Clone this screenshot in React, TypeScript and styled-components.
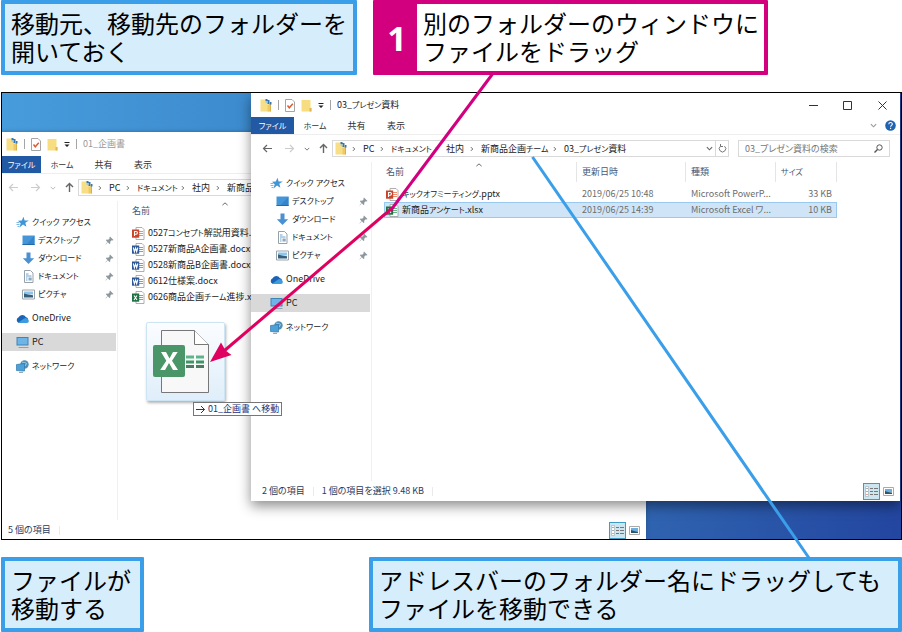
import React from "react";
import styled, { createGlobalStyle } from "styled-components";

const Global = createGlobalStyle`
  * { box-sizing: border-box; }
  body { margin: 0; background: #fff; }
  button, input { font: inherit; color: inherit; border: 0; background: none; padding: 0; margin: 0; }
  svg { display: block; flex: none; }
`;

const BLUE = "#3a9ee8";
const PINK = "#d2007f";

const Page = styled.main`
  position: relative;
  display: flex;
  flex-direction: column;
  gap: 17px;
  padding-left: 1px;
  font-family: "Noto Sans CJK JP", sans-serif;
`;
const CalloutRow = styled.div<{ $spread?: boolean }>`
  display: flex;
  gap: 16px;
  justify-content: ${(p) => (p.$spread ? "space-between" : "flex-start")};
`;
const Callout = styled.section<{ $tone: string; $fill: string }>`
  display: flex;
  border: 4px solid ${(p) => p.$tone};
  border-radius: 1px;
  background: ${(p) => p.$fill};
`;
const CalloutText = styled.p<{ $end?: number }>`
  margin: 0;
  padding: 5px ${(p) => p.$end ?? 6}px 6px 6px;
  font-size: 24px;
  line-height: 28px;
  color: #000;
  white-space: nowrap;
`;
const Step = styled.strong`
  display: flex;
  align-items: center;
  justify-content: center;
  width: 40px;
  background: ${PINK};
  color: #fff;
  font: 700 34px/1 "Open Sans", sans-serif;
`;
const Desktop = styled.div`
  position: relative;
  height: 448px;
  overflow: hidden;
  border: 1px solid #000;
  background:
    linear-gradient(90deg, transparent 70%, #2f63b0 72%, #2346a0 100%),
    linear-gradient(90deg, #479cdb, #3a86cb 35%, #3a86cb);
`;
const Win = styled.section<{ $front?: boolean }>`
  position: absolute;
  top: ${(p) => (p.$front ? 0 : 39)}px;
  left: ${(p) => (p.$front ? 249 : 0)}px;
  right: ${(p) => (p.$front ? 1 : 255)}px;
  height: 408px;
  display: flex;
  flex-direction: column;
  background: #fff;
  color: #222;
  font: 9px/16px "Noto Sans CJK JP", sans-serif;
  font-feature-settings: "palt";
  white-space: nowrap;
  box-shadow: ${(p) => (p.$front ? "0 5px 12px rgba(0,0,0,.45)" : "0 0 4px rgba(0,0,0,.3)")};
`;
const Kana = styled.span`
  font-size: 8px;
`;
const TitleBar = styled.header<{ $inset: number; $dim: boolean }>`
  display: flex;
  align-items: center;
  height: 24px;
  padding-left: ${(p) => p.$inset + 4}px;
  gap: 6px;
  color: ${(p) => (p.$dim ? "#999" : "#222")};
`;
const Rule = styled.i`
  width: 1px;
  height: 10px;
  background: #a5a5a5;
`;
const Title = styled.h2`
  margin: 0;
  font-size: 9px;
  font-weight: 400;
`;
const Push = styled.div`
  display: flex;
  align-items: center;
  margin-left: auto;
`;
const IconButton = styled.button<{ $w: number }>`
  display: flex;
  align-items: center;
  justify-content: center;
  width: ${(p) => p.$w}px;
  height: 16px;
`;
const Tabs = styled.nav`
  display: flex;
  height: 18px;
  border-bottom: 1px solid #eee;
`;
const Tab = styled.button<{ $w: number; $on?: boolean }>`
  width: ${(p) => p.$w}px;
  height: 17px;
  color: ${(p) => (p.$on ? "#fff" : "#333")};
  background: ${(p) => (p.$on ? "#2259a5" : "none")};
`;
const AddressRow = styled.div<{ $inset: number }>`
  display: flex;
  align-items: center;
  height: 27px;
  padding: 0 10px 0 ${(p) => p.$inset}px;
`;
const Address = styled.div`
  flex: 1;
  min-width: 0;
  height: 17px;
  display: flex;
  align-items: center;
  border: 1px solid #d9d9d9;
  padding-left: 2px;
`;
const Crumbs = styled.ol`
  display: flex;
  align-items: center;
  flex: 1;
  min-width: 0;
  overflow: hidden;
  margin: 0;
  padding: 0 0 0 4px;
  list-style: none;
`;
const Crumb = styled.li<{ $w: number }>`
  display: flex;
  align-items: center;
  gap: 6px;
  flex: none;
  width: ${(p) => p.$w}px;
`;
const Refresh = styled(IconButton)`
  border-left: 1px solid #d9d9d9;
`;
const Search = styled.label`
  display: flex;
  align-items: center;
  width: 152px;
  height: 17px;
  margin-left: 9px;
  padding: 0 6px;
  border: 1px solid #d9d9d9;
`;
const SearchInput = styled.input`
  flex: 1;
  min-width: 0;
  height: 15px;
  font-feature-settings: "palt";
  &::placeholder { color: #777; opacity: 1; }
`;
const Body = styled.div`
  display: flex;
  flex: 1;
  min-height: 0;
`;
const Side = styled.nav<{ $inset: number }>`
  width: ${(p) => 116 + p.$inset}px;
  padding-top: 12px;
  border-right: 1px solid #f0f0f0;
`;
const Place = styled.a<{ $inset: number; $sub?: boolean; $gap?: boolean; $on?: boolean }>`
  display: flex;
  align-items: center;
  gap: 3px;
  height: 18px;
  margin: ${(p) => (p.$gap ? 6 : 0)}px 1px 0 0;
  padding: 0 2px 0 ${(p) => p.$inset + (p.$sub ? 20 : 14)}px;
  background: ${(p) => (p.$on ? "#d9d9d9" : "none")};
  color: #222;
  text-decoration: none;
`;
const PinSlot = styled.span`
  margin-left: auto;
`;
const Files = styled.table`
  width: 453px;
  height: max-content;
  margin-left: 12px;
  table-layout: fixed;
  border-spacing: 0;
`;
const Head = styled.th<{ $w: number }>`
  position: relative;
  width: ${(p) => p.$w}px;
  height: 20px;
  padding: 0 0 0 ${(p) => (p.$w > 150 ? 2 : 5)}px;
  border-right: 1px solid #e5e5e5;
  color: #44587c;
  font-weight: 400;
  text-align: left;
`;
const SortMark = styled.span`
  position: absolute;
  top: 0;
  left: 48%;
`;
const Gap = styled.tr`
  height: 4px;
`;
const FileRow = styled.tr<{ $on?: boolean }>`
  height: 16px;
  background: ${(p) => (p.$on ? "#cfe5f7" : "none")};
  outline: ${(p) => (p.$on ? "1px solid #99c9ee" : "none")};
  outline-offset: -1px;
`;
const Cell = styled.td<{ $end?: boolean }>`
  padding: 0 5px;
  line-height: 16px;
  color: #6d6d6d;
  text-align: ${(p) => (p.$end ? "right" : "left")};
`;
const NameCell = styled.td`
  padding: 0 0 0 2px;
`;
const FileName = styled.div`
  display: flex;
  align-items: center;
  gap: 3px;
  line-height: 16px;
`;
const Status = styled.footer<{ $inset: number }>`
  display: flex;
  align-items: center;
  height: 20px;
  gap: 8px;
  padding: 0 3px 0 ${(p) => p.$inset + 6}px;
  color: #2a3b5c;
`;
const Sep = styled.i`
  width: 1px;
  height: 9px;
  background: #eaeaea;
`;
const ViewButton = styled.button<{ $on?: boolean }>`
  display: flex;
  align-items: center;
  justify-content: center;
  width: 17px;
  height: 17px;
  border: ${(p) => (p.$on ? "1px solid #3f9bc4" : "0")};
  background: ${(p) => (p.$on ? "#cce6f1" : "none")};
`;
const Ghost = styled.div`
  position: absolute;
  left: 144px;
  top: 229px;
  width: 79px;
  height: 79px;
  border-radius: 2px;
  border: 1px solid #cde4f3;
  background: linear-gradient(#fbfdff, #dfeefa);
  box-shadow: 1px 2px 3px rgba(0, 0, 0, 0.3);
`;
const DragTip = styled.div`
  position: absolute;
  left: 191px;
  top: 309px;
  display: flex;
  align-items: center;
  gap: 2px;
  height: 14px;
  padding: 0 2px 0 1px;
  border: 1px solid #767676;
  background: #fff;
  color: #23307c;
  font: 9px/12px "Noto Sans CJK JP", sans-serif;
  font-feature-settings: "palt";
  white-space: nowrap;
`;
const Leaders = styled.svg`
  position: absolute;
  top: 0;
  left: 0;
  pointer-events: none;
`;

/* Katakana runs are set one size down so they read as a narrow UI face. */
const UiText = ({ children }: { children: string }) => (
  <span>
    {children.split(/([ァ-ヶー]+)/).map((part, i) => (i % 2 ? <Kana key={i}>{part}</Kana> : part))}
  </span>
);

const FolderDoc = () => (
  <svg width="12" height="13" viewBox="0 0 12 13">
    <path d="M.5.500h6.500l3.500 3.500v8.500H.5z" fill="#f8df86" />
    <path d="M7.500 6h3v6.500h-3z" fill="#efc966" />
    <path d="M10.500 4v8.500" stroke="#d9b04c" />
    <path d="M5.500 0h2v2h-2zM7.500 1h2v2h-2zM7.500 3h1.500v2H7.500zM9.500 3h2v2.500h-2z" fill="#3576b5" />
    <path d="M5.500 2h2v2h-2z" fill="#a8c8d8" />
  </svg>
);
const Folder = () => (
  <svg width="11" height="13" viewBox="0 0 11 13">
    <path d="M.5 1h9v8h1v3.500H.5z" fill="#f7dd80" />
    <path d="M8.500 9h2v3.500h-2z" fill="#dfb650" />
  </svg>
);
const CheckDoc = () => (
  <svg width="10" height="13" viewBox="0 0 10 13" fill="none">
    <path d="M.5.500h6.500l2.500 2.500v9.500h-9z" fill="#fff" stroke="#a5a5a5" />
    <path d="M2.500 6.500 4.300 8.800 7.800 4.800" stroke="#e0582f" strokeWidth="1.400" />
  </svg>
);
const Chevron = ({ dir = "down", c = "#666", s = 7 }: { dir?: "down" | "right" | "up"; c?: string; s?: number }) => {
  const d = { down: "M1 2.500 4 5.500 7 2.500", right: "M2.500 1.500 5 4 2.500 6.500", up: "M.5 5.500 4 2.500 7.500 5.500" }[dir];
  return (
    <svg width={s} height={s} viewBox="0 0 8 8" fill="none" stroke={c} strokeWidth="1.300"><path d={d} /></svg>
  );
};
const Arrow = ({ turn, c, thick = 1.2 }: { turn: number; c: string; thick?: number }) => (
  <svg width="11" height="11" viewBox="0 0 11 11" fill="none" stroke={c} strokeWidth={thick}>
    <path d="M10 5.500H1.500M5 2 1.500 5.500 5 9" transform={`rotate(${turn} 5.500 5.500)`} />
  </svg>
);
const Drop = () => (
  <svg width="6" height="7" viewBox="0 0 6 7" fill="#222"><path d="M.5 1h5v1h-5zM.5 3.500h5L3 6z" /></svg>
);
const PlaceIcon = ({ kind }: { kind: string }) => (
  <svg width="13" height="13" viewBox="0 0 13 13">
    {kind === "star" && (
      <>
        <path d="M7.500.8 8.600 4.500l4.200-.1-3.500 2.400 1.100 4L7 8.600 3.500 11.500l1.200-4.300L2 4.800l3.800-.3z" fill="#3f95d6" />
        <path d="M.5 8.500h3M1.500 10.500h2M.5 6.500h3" stroke="#7bb8e4" />
      </>
    )}
    {kind === "desk" && (
      <>
        <path d="M.5 1.500h12v9.500h-12z" fill="#4496d8" />
        <path d="M12.500 1.500V11H4z" fill="#3485cc" />
        <path d="M.5 10h12v1h-12z" fill="#2468a8" />
      </>
    )}
    {kind === "down" && <path d="M4.500.5h4v5.700h3.700L6.500 12 .8 6.200h3.700z" fill="#4a90d2" />}
    {kind === "doc" && (
      <>
        <path d="M2.500.5h6l2.500 2.500v9.500h-8.500z" fill="#fff" stroke="#97a1aa" />
        <path d="M4 4h2.500M4 6h5.500M4 8h1.500M4 10h1.500" stroke="#6aa2cf" />
        <path d="M6.500 7.500h3.200v3H6.500z" fill="#8aa9c2" />
      </>
    )}
    {kind === "pic" && (
      <>
        <path d="M.5 2h12v9H.5z" fill="#fff" stroke="#9ca3a8" />
        <path d="M2 3.500h9v3H2z" fill="#8ec5ea" />
        <path d="M2 5.500l4 1 5 .8v2.200H2z" fill="#355f7c" />
      </>
    )}
    {kind === "cloud" && (
      <>
        <path d="M3 11a3 3 0 0 1-.4-5.700A4 4 0 0 1 9.800 5 3.100 3.100 0 0 1 10 11z" fill="#1b64b5" />
        <path d="M2.300 10.700 8 6.500a3.300 3.300 0 0 1 4.800 2.300C12.900 10.200 12 11 10.800 11H3z" fill="#3d9be0" />
      </>
    )}
    {kind === "pc" && (
      <>
        <path d="M.5 1h12v8.500H.5z" fill="#3f83b7" />
        <path d="M1.500 2h10v6.500h-10z" fill="#6db5e6" />
        <path d="M2.500 11.500h10" stroke="#8fa0ae" />
      </>
    )}
    {kind === "net" && (
      <>
        <circle cx="8.500" cy="4.500" r="4.200" fill="#4f8fb8" />
        <path d="M6 2c2 1 3 0 4.500 1.500L9 6" stroke="#a9d3e2" fill="none" />
        <path d="M.5 4.500 8.500 3.500v7.500L.5 10.500z" fill="#4ea0d9" stroke="#2f78ad" strokeWidth=".7" />
        <path d="M3 12.300h4" stroke="#7895a8" />
      </>
    )}
  </svg>
);
const Pin = () => (
  <svg width="9" height="9" viewBox="0 0 9 9">
    <path d="M5 .5 8.500 4l-1 .5-.8-.2-1.500 1.500.1 1.700-.8.500-1.700-1.700L.8 8.500.500 8.200l2-2.200L1 4.400l.5-.8 1.700.1L4.700 2.300 4.500 1.300z" fill="#8d979e" />
  </svg>
);
const APP: Record<string, [string, string]> = { P: ["#c8442a", "#e98f74"], W: ["#2b579a", "#7d9ccb"], X: ["#1f7145", "#6bb389"] };
const MARK: Record<string, string> = {
  P: "M2.500 9V4.500h1.600a1.300 1.300 0 0 1 0 2.700H2.500",
  W: "M1.300 4.500 2.400 8.700 3.600 5 4.700 8.700 5.800 4.500",
  X: "M2 4.500 5 9M5 4.500 2 9",
};
const FileIcon = ({ app }: { app: string }) => (
  <svg width="13" height="13" viewBox="0 0 13 13" fill="none">
    <path d="M4 .5h6L12 2.500v10H4z" fill="#fff" stroke="#9a9a9a" strokeWidth=".8" />
    <path d="M7 4.500h4M7 6.500h4M7 8.500h4" stroke={APP[app][1]} strokeWidth="1.200" />
    <path d="M0 2.500h7.200v8.200H0z" fill={APP[app][0]} />
    <path d={MARK[app]} stroke="#fff" strokeWidth="1.100" />
  </svg>
);
const ListView = () => (
  <svg width="13" height="11" viewBox="0 0 13 11" fill="none">
    <path d="M.5.500h3v10h-3z" fill="#fff" stroke="#aab4b8" strokeWidth=".7" />
    <path d="M1.500 2.500h1M1.500 5.500h1" stroke="#557" />
    <path d="M1.500 8.500h1" stroke="#d33" />
    <path d="M5 2.500h3M9 2.500h4M5 5.500h3M9 5.500h4M5 8.500h3M9 8.500h4" stroke="#777" />
  </svg>
);
const PicView = () => (
  <svg width="11" height="9" viewBox="0 0 11 9">
    <path d="M.5.500h10v8h-10z" fill="#fff" stroke="#aaa" />
    <path d="M2 2h7v3H2z" fill="#6bb0e0" />
    <path d="M2 4l3 1 4 .5V7H2z" fill="#2d566b" />
  </svg>
);
const ExcelLarge = () => (
  <svg width="77" height="77" viewBox="0 0 77 77">
    <path d="M14.500 7.500h33l14 14v48h-47z" fill="#f8f8f8" stroke="#777" />
    <path d="M47.500 7.500v14h14" fill="#fff" stroke="#777" />
    <path d="M39 32.500h8v3h-8zM49 32.500h8v3h-8z" fill="#5fb38a" />
    <path d="M39 37.500h8v3h-8zM49 37.500h8v3h-8z" fill="#41946a" />
    <path d="M39 42h8v3h-8zM49 42h8v3h-8z" fill="#4c7a62" />
    <rect x="6" y="22" width="32" height="32" rx="2" fill="#4b9668" />
    <path d="M14 29h5l3.500 6.500L26 29h4.700l-5.700 8.800 6 9.200h-5L22 40l-4 7h-4.800l6.100-9.200z" fill="#fff" />
  </svg>
);

const places = [
  { icon: "star", text: "クイック アクセス" },
  { icon: "desk", text: "デスクトップ", sub: true },
  { icon: "down", text: "ダウンロード", sub: true },
  { icon: "doc", text: "ドキュメント", sub: true },
  { icon: "pic", text: "ピクチャ", sub: true },
  { icon: "cloud", text: "OneDrive", gap: true },
  { icon: "pc", text: "PC", gap: true, on: true },
  { icon: "net", text: "ネットワーク", gap: true },
];
const crumbs: [string, number][] = [["PC", 28], ["ドキュメント", 55], ["社内", 35], ["新商品企画チーム", 83], ["03_プレゼン資料", 90]];

type FileItem = { app: string; name: string; date?: string; type?: string; size?: string; on?: boolean };
type ExplorerProps = { title: string; front?: boolean; files: FileItem[]; status: string[] };

const Explorer = ({ title, front = false, files, status }: ExplorerProps) => {
  const inset = front ? 5 : 0;
  return (
    <Win $front={front} aria-label={title}>
      <TitleBar $inset={inset} $dim={!front}>
        <FolderDoc /><Rule /><CheckDoc /><Folder /><Drop /><Rule />
        <Title><UiText>{title}</UiText></Title>
        {front && (
          <Push>
            <IconButton $w={34} aria-label="最小化"><svg width="9" height="9"><path d="M0 4.500h9" stroke="#333" /></svg></IconButton>
            <IconButton $w={34} aria-label="最大化"><svg width="9" height="9"><path d="M.5.500h8v8h-8z" fill="none" stroke="#333" /></svg></IconButton>
            <IconButton $w={36} aria-label="閉じる"><svg width="9" height="9"><path d="M.5.500l8 8M8.500.500l-8 8" stroke="#333" /></svg></IconButton>
          </Push>
        )}
      </TitleBar>
      <Tabs>
        <Tab $on $w={front ? 43 : 39}><UiText>ファイル</UiText></Tab>
        <Tab $w={42}><UiText>ホーム</UiText></Tab>
        <Tab $w={41}>共有</Tab>
        <Tab $w={38}>表示</Tab>
        {front && (
          <Push>
            <IconButton $w={16} aria-label="リボンの展開"><Chevron c="#999" /></IconButton>
            <IconButton $w={19} aria-label="ヘルプ">
              <svg width="11" height="11" viewBox="0 0 11 11" fill="none">
                <circle cx="5.500" cy="5.500" r="5.300" fill="#1f63b4" />
                <path d="M3.800 4.200c0-2.300 3.500-2.200 3.500-.2 0 1.300-1.700 1.400-1.700 2.800M5.600 7.800v1.200" stroke="#fff" strokeWidth="1.100" />
              </svg>
            </IconButton>
          </Push>
        )}
      </Tabs>
      <AddressRow $inset={inset}>
        <IconButton $w={22} aria-label="戻る"><Arrow turn={0} c={front ? "#666" : "#ccc"} /></IconButton>
        <IconButton $w={22} aria-label="進む"><Arrow turn={180} c="#ccc" /></IconButton>
        <IconButton $w={14} aria-label="履歴"><Chevron s={6} c={front ? "#777" : "#bbb"} /></IconButton>
        <IconButton $w={18} aria-label="上へ"><Arrow turn={90} c="#666" thick={1.4} /></IconButton>
        <Address>
          <FolderDoc />
          <Crumbs>
            {crumbs.map(([text, w]) => (
              <Crumb key={text} $w={w}>
                <Chevron dir="right" s={6} />
                <button><UiText>{text}</UiText></button>
              </Crumb>
            ))}
          </Crumbs>
          <IconButton $w={12} aria-label="履歴を表示"><Chevron /></IconButton>
          <Refresh $w={13} aria-label="更新">
            <svg width="9" height="9" viewBox="0 0 9 9" fill="none" stroke="#777"><path d="M6.500 2.200A3.200 3.200 0 1 1 2.500 2.200M2.500 0v2.500H5" /></svg>
          </Refresh>
        </Address>
        <Search>
          <SearchInput aria-label="検索" placeholder={title + "の検索"} />
          <svg width="9" height="9" viewBox="0 0 9 9" fill="none" stroke="#555"><circle cx="5.500" cy="3.500" r="2.700" /><path d="M3.500 5.500.5 8.500" strokeWidth="1.400" /></svg>
        </Search>
      </AddressRow>
      <Body>
        <Side $inset={inset}>
          {places.map((p) => (
            <Place key={p.text} href="#" $inset={inset} $sub={p.sub} $gap={p.gap} $on={p.on}>
              <PlaceIcon kind={p.icon} />
              <UiText>{p.text}</UiText>
              {p.sub && <PinSlot><Pin /></PinSlot>}
            </Place>
          ))}
        </Side>
        <Files>
          <thead>
            <tr>
              <Head $w={193}>名前<SortMark><Chevron dir="up" s={6} /></SortMark></Head>
              <Head $w={109}>更新日時</Head>
              <Head $w={90}>種類</Head>
              <Head $w={61}><UiText>サイズ</UiText></Head>
            </tr>
            <Gap />
          </thead>
          <tbody>
            {files.map((f) => (
              <FileRow key={f.name} $on={f.on}>
                <NameCell><FileName><FileIcon app={f.app} /><UiText>{f.name}</UiText></FileName></NameCell>
                <Cell>{f.date}</Cell>
                <Cell>{f.type}</Cell>
                <Cell $end>{f.size}</Cell>
              </FileRow>
            ))}
          </tbody>
        </Files>
      </Body>
      <Status $inset={inset}>
        {status.map((s) => (
          <React.Fragment key={s}><span>{s}</span><Sep /></React.Fragment>
        ))}
        <Push>
          <ViewButton $on aria-label="詳細"><ListView /></ViewButton>
          <ViewButton aria-label="大アイコン"><PicView /></ViewButton>
        </Push>
      </Status>
    </Win>
  );
};

export default function App() {
  return (
    <>
      <Global />
      <Page>
        <CalloutRow>
          <Callout $tone={BLUE} $fill="#d6edfb">
            <CalloutText>移動元、移動先のフォルダーを<br />開いておく</CalloutText>
          </Callout>
          <Callout $tone={PINK} $fill="#fff">
            <Step>1</Step>
            <CalloutText $end={5}>別のフォルダーのウィンドウに<br />ファイルをドラッグ</CalloutText>
          </Callout>
        </CalloutRow>
        <Desktop>
          <Explorer
            title="01_企画書"
            status={["5 個の項目"]}
            files={[
              { app: "P", name: "0527コンセプト解説用資料.pptx" },
              { app: "W", name: "0527新商品A企画書.docx" },
              { app: "W", name: "0528新商品B企画書.docx" },
              { app: "W", name: "0612仕様案.docx" },
              { app: "X", name: "0626商品企画チーム進捗.xlsx" },
            ]}
          />
          <Explorer
            front
            title="03_プレゼン資料"
            status={["2 個の項目", "1 個の項目を選択  9.48 KB"]}
            files={[
              { app: "P", name: "キックオフミーティング.pptx", date: "2019/06/25 10:48", type: "Microsoft PowerP...", size: "33 KB" },
              { app: "X", name: "新商品アンケート.xlsx", date: "2019/06/25 14:39", type: "Microsoft Excel ワ...", size: "10 KB", on: true },
            ]}
          />
          <Ghost><ExcelLarge /></Ghost>
          <DragTip><Arrow turn={180} c="#23307c" thick={1} />01_企画書 へ移動</DragTip>
        </Desktop>
        <CalloutRow $spread>
          <Callout $tone={BLUE} $fill="#d6edfb">
            <CalloutText $end={9}>ファイルが<br />移動する</CalloutText>
          </Callout>
          <Callout $tone={BLUE} $fill="#d6edfb">
            <CalloutText $end={17}>アドレスバーのフォルダー名にドラッグしても<br />ファイルを移動できる</CalloutText>
          </Callout>
        </CalloutRow>
        <Leaders width="902" height="632" viewBox="0 0 902 632" fill="none" strokeWidth="3" aria-hidden="true">
          <path d="M492.500 74 391 210" stroke={PINK} />
          <path d="M391 209 224 351" stroke="#e0005f" />
          <path d="M210 362 221 342.500 225.500 350.500 231.500 355z" fill="#e0005f" />
          <path d="M532.500 157 809 558" stroke={BLUE} />
        </Leaders>
      </Page>
    </>
  );
}
